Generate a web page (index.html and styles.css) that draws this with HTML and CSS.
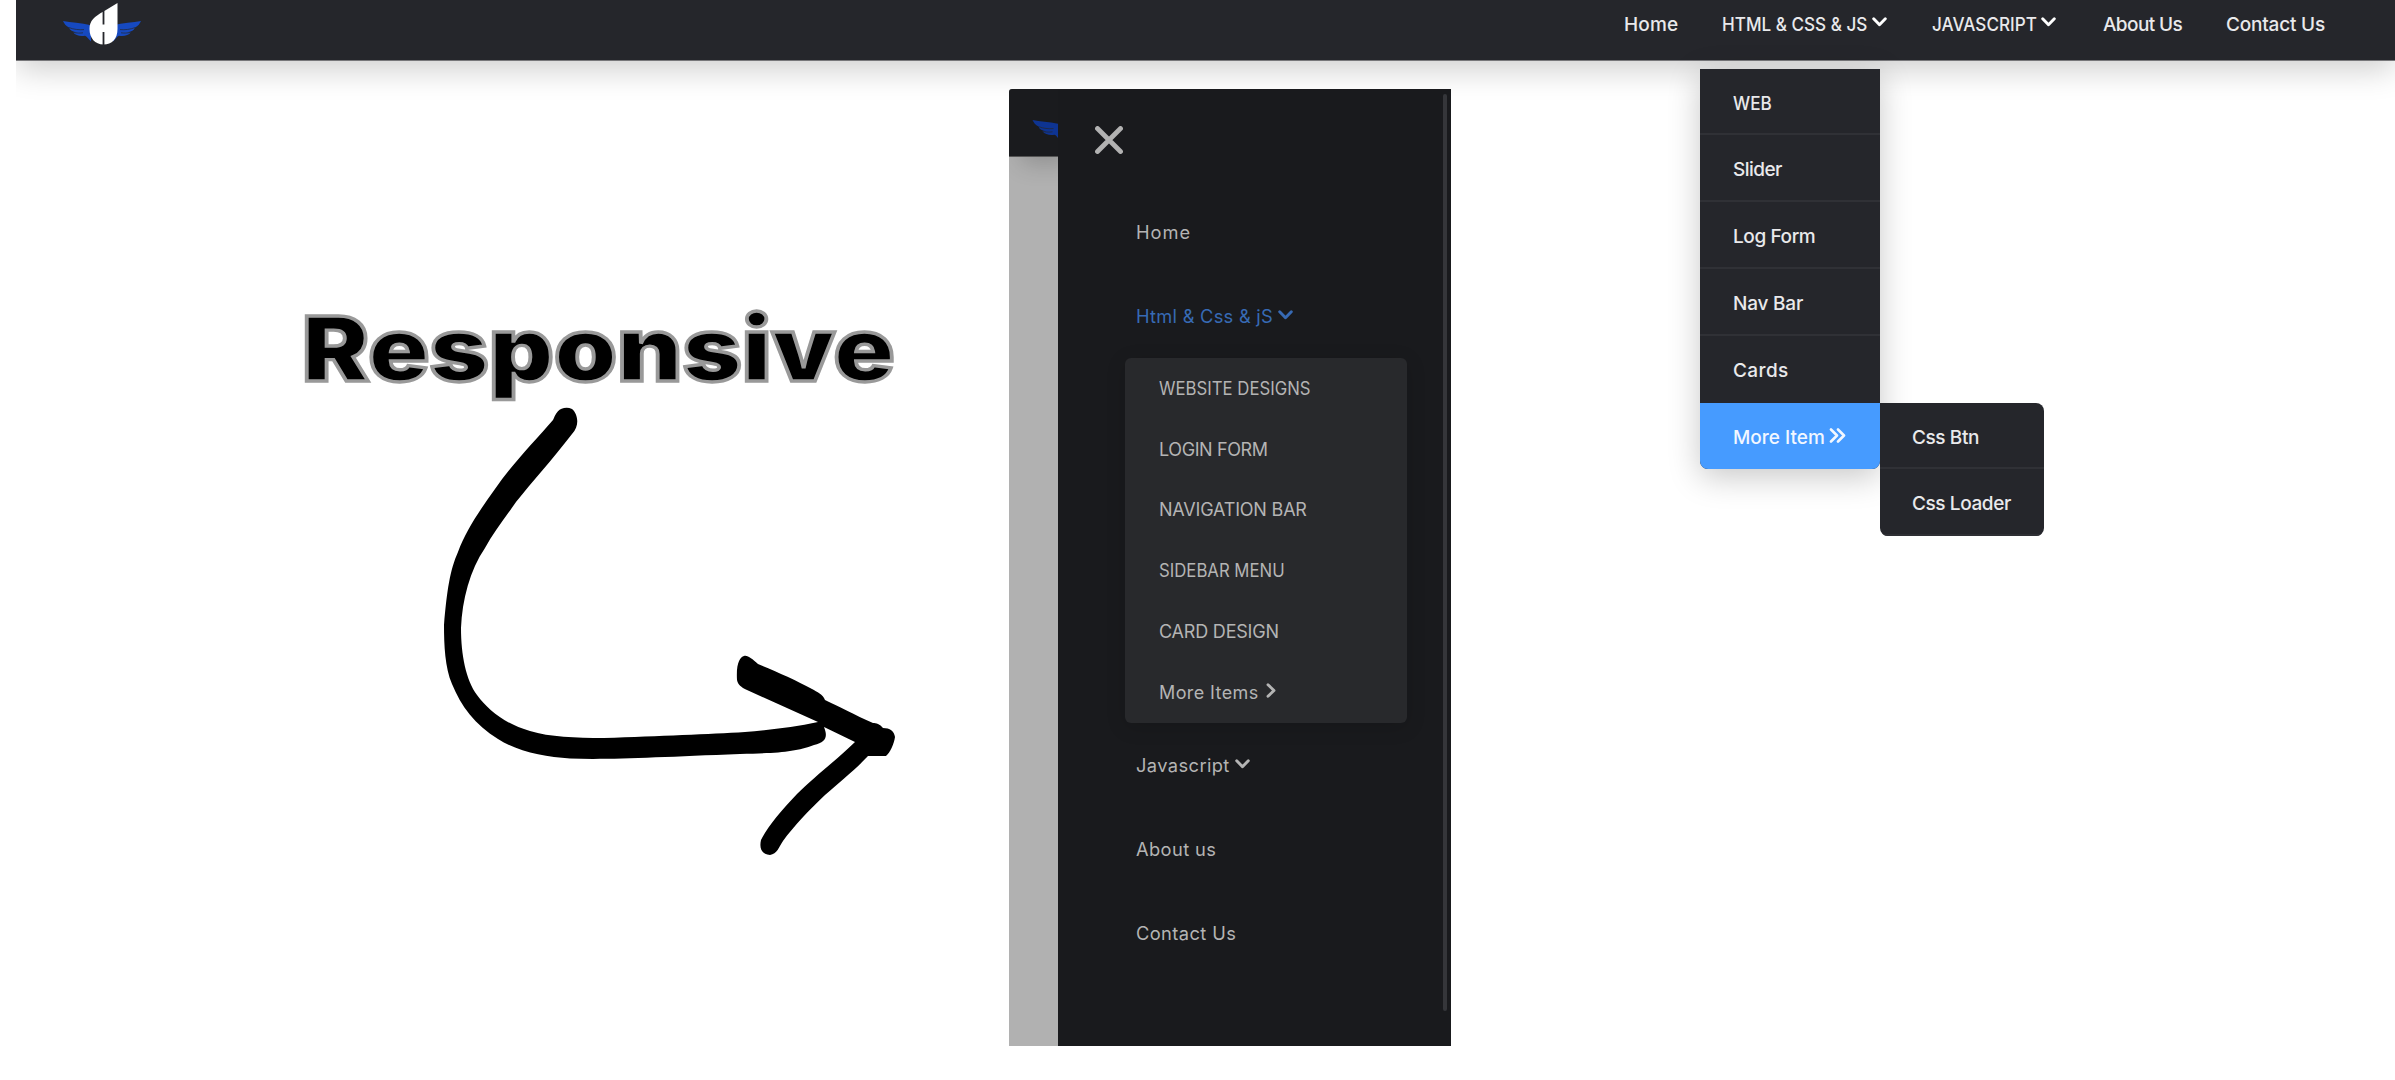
FILE: index.html
```html
<!DOCTYPE html>
<html lang="en">
<head>
<meta charset="utf-8">
<title>Responsive Nav Bar</title>
<link rel="stylesheet" href="styles.css">
</head>
<body>
<svg class="sprite" width="0" height="0">
  <symbol id="down" viewBox="0 0 15 10"><path d="M1.7 1.7 7.5 7.700 13.3 1.7"/></symbol>
  <symbol id="right" viewBox="0 0 10 15"><path d="M2 1.8 8 7.5 2 13.2"/></symbol>
  <symbol id="more" viewBox="0 0 17 15"><path d="M2 1.5 8 7.5 2 13.5M9 1.5 15 7.5 9 13.5"/></symbol>
  <symbol id="wing" viewBox="0 0 28 21">
    <path d="M0 0C8 1.500 18 2 28 4.300V20.500C25.500 18.500 24.500 15.800 22 14.800C17 15.600 12.500 14.500 10 11.300L14 11.200C9.500 11 7 9.500 6 6.600C3 5 1 2.500 0 0Z"/>
    <path class="feather" d="M6 6.600C11 8.500 16 9 21 8.600M10 11.300C14 12.300 17 12.200 20 11.800"/>
  </symbol>
</svg>

<header class="site-header">
  <div class="bar">
    <svg class="logo" viewBox="0 0 80 48">
      <use href="#wing" x="0" y="21" width="28" height="21"/>
      <use href="#wing" x="0" y="0" width="28" height="21" transform="matrix(-1 0 0 1 78 21)"/>
      <path class="logo-body" d="M54.500 3V29C54.500 39 49 44.500 40.500 44.500C32 44.500 26.500 38 26.500 29C26.500 20.500 31.500 16.500 40.500 11.500Z"/>
      <path class="logo-slit" d="M40.500 11V24.500M40.500 32V45"/>
    </svg>
    <nav class="main-nav">
      <a class="nav-home">Home</a>
      <a class="nav-html"><span class="squeeze">HTML &amp; CSS &amp; JS</span><svg class="ico down"><use href="#down"/></svg></a>
      <a class="nav-script"><span class="squeeze">JAVASCRIPT</span><svg class="ico down"><use href="#down"/></svg></a>
      <a class="nav-about">About Us</a>
      <a class="nav-contact">Contact Us</a>
    </nav>
  </div>
</header>

<ul class="dropdown">
  <li><span class="squeeze">WEB</span></li>
  <li class="t5">Slider</li>
  <li class="t4">Log Form</li>
  <li class="t2">Nav Bar</li>
  <li class="w4">Cards</li>
  <li class="active">More Item<svg class="ico more"><use href="#more"/></svg>
    <ul class="flyout">
      <li class="t4">Css Btn</li>
      <li class="t4">Css Loader</li>
    </ul>
  </li>
</ul>

<main class="stage">
  <section class="caption">
    <h1>Responsive</h1>
    <svg class="arrow" viewBox="420 390 500 480">
      <path d="M564 408C557 409 555 416 553 420C535 441 513 463 495 489C480 510 466 530 458 552C450 570 447 590 444 625C444 645 445 668 452 684C461 706 475 725 498 739C518 752 545 757 570 758.500C610 760 660 757 740 754C780 753 795 752 814 745C826 742 828 737 824 727L855 742C840 757 814 777 797 794C781 811 768 826 761 840C759 849 762 854 770 855C777 854 779 847 783 841C793 827 810 809 825 795C840 782 858 767 868 756H886C890 753 894 744 895 737C894 731 890 728 883 728C880 724 876 723 873 723C855 715 838 706 825 700C823 694 817 692 812 689C796 680 775 671 758 664C752 659 748 655 744 656C740 657 736 663 737 680C738 685 741 687 747 690L818 722C795 727 770 730 745 732C710 734 660 736 604 738C575 738 550 737 530 731C505 724 488 710 477 695C466 680 461 655 461 628C462 600 470 570 485 548C493 533 505 518 516 502C532 482 552 460 572 434C580 426 578 414 572 409Q568 407 564 408Z"/>
    </svg>
  </section>

  <section class="phone">
    <div class="page-peek">
      <div class="peek-bar"><svg class="peek-wing"><use href="#wing"/></svg></div>
    </div>
    <div class="drawer">
      <svg class="close" viewBox="0 0 28 28"><path d="M2.500 2.500 25.500 25.500M25.500 2.500 2.500 25.500"/></svg>
      <ul class="menu">
        <li class="m-home">Home</li>
        <li class="m-html">Html &amp; Css &amp; jS<svg class="ico down"><use href="#down"/></svg></li>
        <li class="group">
          <ul class="submenu">
            <li><span class="s-web">WEBSITE DESIGNS</span></li>
            <li class="t4">LOGIN FORM</li>
            <li class="t2">NAVIGATION BAR</li>
            <li><span class="s-side">SIDEBAR MENU</span></li>
            <li class="t1">CARD DESIGN</li>
            <li class="w4">More Items<svg class="ico right"><use href="#right"/></svg></li>
          </ul>
        </li>
        <li class="w4">Javascript<svg class="ico down"><use href="#down"/></svg></li>
        <li class="w4">About us</li>
        <li class="w4">Contact Us</li>
      </ul>
      <div class="scrollbar"></div>
    </div>
  </section>
</main>
</body>
</html>
```
FILE: styles.css
```css
* { box-sizing: border-box; }

body {
  margin: 0;
  height: 1080px;
  overflow: hidden;
  position: relative;
  background: #fff;
  font-family: Inter, "Open Sans", sans-serif;
}

ul { list-style: none; margin: 0; padding: 0; }
.sprite { position: absolute; }

.ico {
  fill: none;
  stroke: currentColor;
  stroke-width: 2.9;
  stroke-linecap: round;
  stroke-linejoin: round;
  flex: none;
}
.down { width: 15px; height: 10px; }
.right { width: 10px; height: 15px; }
.more { width: 17px; height: 15px; stroke-width: 2.6; }
.feather { fill: none; stroke: #25262b; stroke-width: .7; }

.t1 { letter-spacing: -.2px; }
.t2 { letter-spacing: -.2px; }
.t4 { letter-spacing: -.4px; }
.t5 { letter-spacing: -.55px; }
.w4 { letter-spacing: .4px; }
.squeeze { display: inline-block; transform: scaleX(.9); transform-origin: 0 50%; }

/* Header */
.site-header {
  height: 140px;
  margin-left: 16px;
  overflow: hidden;
}
.bar {
  height: 61px;
  display: flex;
  justify-content: space-between;
  background: #25262b;
  border-bottom: 1px solid #77777a;
  box-shadow: 0 8px 32px rgba(0, 0, 0, .2);
}
.logo { width: 80px; height: 48px; margin-left: 47px; fill: #1649c0; }
.logo-body { fill: #fff; }
.logo-slit { stroke: #25262b; stroke-width: 1.8; }

.main-nav {
  display: grid;
  grid-template-columns: 98px 210px 171px 123px 169px;
  height: 48px;
  color: #e9e9eb;
  font-size: 19px;
  font-weight: 500;
  white-space: nowrap;
}
.main-nav a { display: flex; align-items: center; }
.main-nav .ico { margin-top: -4px; color: #fff; }
.nav-home { letter-spacing: .17px; }
.nav-html .ico { margin-left: -11px; }
.nav-script .ico { margin-left: -7px; }
.nav-about { letter-spacing: -.6px; }
.nav-contact { letter-spacing: -.2px; }

/* Desktop dropdown */
.dropdown {
  position: absolute;
  left: 1700px;
  top: 69px;
  width: 180px;
  border-radius: 0 0 8px 8px;
  background: #25262b;
  box-shadow: 0 8px 32px rgba(0, 0, 0, .22);
  color: #e9e9eb;
  font-size: 19px;
  font-weight: 500;
}
.dropdown li {
  height: 67px;
  padding: 4px 0 0 33px;
  display: flex;
  align-items: center;
  white-space: nowrap;
  border-bottom: 2px solid #303136;
}
.dropdown > li:first-child { height: 66px; padding-top: 5px; }
.dropdown > li:nth-child(5) { border-bottom: 0; padding-top: 2px; }
.dropdown .active {
  position: relative;
  height: 66px;
  border: 0;
  padding-top: 3px;
  border-radius: 0 0 8px 8px;
  background: #469bff;
  color: #f2f7ff;
}
.active .ico { margin: -4px 0 0 4px; }
.flyout {
  position: absolute;
  left: 180px;
  top: 0;
  width: 164px;
  border-radius: 0 8px 8px 8px;
  background: #25262b;
  color: #e9e9eb;
  overflow: hidden;
}
.flyout li { height: 66px; padding-left: 32px; }
.flyout li:last-child { height: 67px; border-bottom-color: #2e2f34; }

/* Stage */
.stage {
  display: flex;
  height: 940px;
  margin-top: -51px;
  position: relative;
}
.caption { width: 1009px; flex: none; padding: 205px 0 0 302px; }
.caption h1 {
  margin: 0;
  width: 512px;
  height: 96px;
  line-height: 110px;
  font-size: 89px;
  font-weight: 900;
  color: #000;
  -webkit-text-stroke: 3.4px #999;
  transform: scaleX(1.133);
  transform-origin: 0 50%;
}
.arrow { display: block; width: 500px; height: 480px; margin-left: 118px; }

.phone {
  display: flex;
  width: 442px;
  height: 957px;
  flex: none;
  border-top-left-radius: 3px;
  overflow: hidden;
}
.page-peek {
  width: 49px;
  overflow: hidden;
  background: #b1b1b1;
}
.peek-bar {
  height: 68px;
  padding: 31px 0 0 22px;
  background: #1a1b1e;
  border-bottom: 1px solid #555;
  box-shadow: 12px 6px 24px rgba(0, 0, 0, .2);
}
.peek-wing { display: block; width: 31px; height: 21px; fill: #0e3492; }
.drawer {
  position: relative;
  flex: 1;
  background: #191a1d;
  color: #b4b4b4;
  font-size: 18.3px;
  white-space: nowrap;
}
.close {
  display: block;
  width: 28px;
  height: 28px;
  margin: 37px 0 0 37px;
  fill: none;
  stroke: #b2b2b2;
  stroke-width: 4.8;
  stroke-linecap: round;
}
.menu { padding: 35px 0 0 78px; }
.menu > li { display: flex; align-items: center; height: 84px; }
.menu .down { margin: -2px 0 0 5px; }
.menu > .m-home { height: 85px; letter-spacing: 1px; }
.m-html { letter-spacing: .25px; color: #376ab4; }
.menu > .group { height: 365px; margin-left: -11px; }
.submenu {
  width: 282px;
  height: 365px;
  padding-left: 34px;
  border-radius: 6px;
  background: #28292c;
  box-shadow: 0 4px 20px rgba(0, 0, 0, .14);
  font-size: 18px;
}
.submenu li { display: flex; align-items: center; height: 60.8px; }
.submenu .right { margin: -3px 0 0 7px; }
.s-web, .s-side { transform: scaleX(.93); transform-origin: 0 50%; }
.scrollbar {
  position: absolute;
  right: 4px;
  top: 5px;
  width: 4px;
  height: 917px;
  border-radius: 2px;
  background: #35363a;
}
```
